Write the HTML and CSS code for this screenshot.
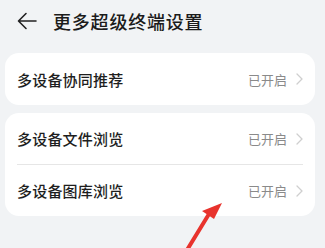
FILE: index.html
```html
<!DOCTYPE html>
<html lang="zh">
<head>
<meta charset="utf-8">
<link rel="stylesheet" href="styles.css">
</head>
<body>
<div class="page">
  <header class="header">
    <svg class="back" width="20" height="18" viewBox="0 0 20 18"><path d="M19 9H2M9 1.5L1.5 9L9 16.5" fill="none" stroke="#222" stroke-width="1.6" stroke-linecap="round" stroke-linejoin="round"/></svg>
    <h1 class="title">更多超级终端设置</h1>
  </header>
  <section class="card">
    <div class="row">
      <span class="label">多设备协同推荐</span>
      <span class="value">已开启</span>
      <svg class="chev" width="7" height="12" viewBox="0 0 7 12"><path d="M1 1l5 5-5 5" fill="none" stroke="#cfcfcf" stroke-width="1.3" stroke-linecap="round" stroke-linejoin="round"/></svg>
    </div>
  </section>
  <section class="card">
    <div class="row">
      <span class="label">多设备文件浏览</span>
      <span class="value">已开启</span>
      <svg class="chev" width="7" height="12" viewBox="0 0 7 12"><path d="M1 1l5 5-5 5" fill="none" stroke="#cfcfcf" stroke-width="1.3" stroke-linecap="round" stroke-linejoin="round"/></svg>
    </div>
    <div class="divider"></div>
    <div class="row">
      <span class="label">多设备图库浏览</span>
      <span class="value">已开启</span>
      <svg class="chev" width="7" height="12" viewBox="0 0 7 12"><path d="M1 1l5 5-5 5" fill="none" stroke="#cfcfcf" stroke-width="1.3" stroke-linecap="round" stroke-linejoin="round"/></svg>
    </div>
  </section>
  <svg class="pointer" width="60" height="60" viewBox="0 0 60 60">
    <path d="M12 60 L34 24" stroke="#e8332d" stroke-width="4" stroke-linecap="round" fill="none"/>
    <path d="M47 13 L27 21 L39 29 Z" fill="#e8332d"/>
  </svg>
</div>
</body>
</html>
```
FILE: styles.css
```css
html, body {
  margin: 0;
  padding: 0;
  background: #f1f3f5;
}
body {
  font-family: "Noto Sans CJK SC", "Noto Sans", sans-serif;
  width: 325px;
  height: 248px;
  overflow: hidden;
}
.page {
  position: relative;
  height: 248px;
  padding: 0 10px 0 5px;
  box-sizing: border-box;
  width: 325px;
}
.header {
  height: 45px;
  display: flex;
  align-items: center;
  padding-left: 12px;
  gap: 16px;
  padding-bottom: 3px;
  box-sizing: border-box;
}
.back {
  display: block;
}
.title {
  margin: 0;
  font-size: 18px;
  font-weight: 500;
  color: #1b1b1b;
  letter-spacing: 0.8px;
}
.card {
  background: #ffffff;
  border-radius: 14px;
  margin-top: 8px;
  padding: 0 12px;
}
.row {
  height: 51px;
  display: flex;
  align-items: center;
}
.card:first-of-type .row {
  height: 52px;
}
.label {
  flex: 1;
  font-size: 15px;
  color: #1e1e1e;
  font-weight: 500;
  letter-spacing: 0.2px;
}
.value {
  font-size: 13px;
  color: #8a8a8a;
  margin-right: 9px;
}
.chev {
  display: block;
}
.divider {
  height: 1px;
  background: #e6e6e6;
}
.pointer {
  position: absolute;
  left: 175px;
  top: 190px;
}
```
